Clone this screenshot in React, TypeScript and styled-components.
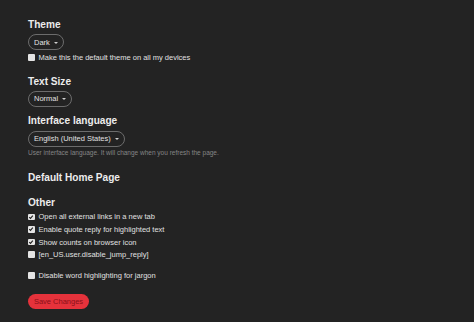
import styled, { createGlobalStyle } from "styled-components";

const GlobalStyle = createGlobalStyle`
  html, body {
    margin: 0;
    padding: 0;
    background: #232323;
  }
  body {
    font-family: "Liberation Sans", Arial, sans-serif;
    color: #dedede;
  }
`;

const Page = styled.div`
  padding: 18px 28px 0 28px;
  display: flex;
  flex-direction: column;
  align-items: flex-start;
`;

const Heading = styled.h3<{ $top?: number }>`
  margin: ${(p) => p.$top ?? 0}px 0 0 0;
  font-size: 10.1px;
  line-height: 14px;
  font-weight: bold;
  color: #ececec;
`;

const SelectPill = styled.div<{ $top?: number }>`
  margin-top: ${(p) => p.$top ?? 2}px;
  height: 16px;
  box-sizing: border-box;
  display: inline-flex;
  align-items: center;
  gap: 4px;
  padding: 0 5px 0 5px;
  border: 1px solid #6c6c6c;
  border-radius: 8px;
  font-size: 7.5px;
  color: #e2e2e2;
`;

const Caret = styled.span`
  width: 0;
  height: 0;
  border-left: 2px solid transparent;
  border-right: 2px solid transparent;
  border-top: 2.5px solid #cfcfcf;
  margin-top: 1px;
`;

const Row = styled.label<{ $top?: number }>`
  margin-top: ${(p) => p.$top ?? 0}px;
  height: 12.6px;
  display: flex;
  align-items: center;
  gap: 4px;
  font-size: 7.5px;
  color: #e0e0e0;
`;

const Box = styled.span`
  width: 6.5px;
  height: 6.5px;
  background: #e4e4e4;
  border-radius: 1px;
  display: inline-flex;
  align-items: center;
  justify-content: center;
  flex-shrink: 0;
`;

const Helper = styled.div`
  margin-top: 1px;
  font-size: 6.5px;
  line-height: 10px;
  color: #858585;
`;

const SaveButton = styled.button`
  margin-top: 12px;
  width: 61px;
  height: 15px;
  border: none;
  border-radius: 8px;
  background: #e5323b;
  color: #8a1119;
  font-family: "Liberation Sans", Arial, sans-serif;
  font-size: 7.5px;
  padding: 0;
`;

const Check = ({ checked }: { checked: boolean }) => (
  <Box>
    {checked && (
      <svg width="6" height="6" viewBox="0 0 10 10">
        <path d="M2 5.2 L4.2 7.4 L8 2.8" fill="none" stroke="#222" strokeWidth="1.8" />
      </svg>
    )}
  </Box>
);

const options = [
  { label: "Open all external links in a new tab", checked: true },
  { label: "Enable quote reply for highlighted text", checked: true },
  { label: "Show counts on browser icon", checked: true },
  { label: "[en_US.user.disable_jump_reply]", checked: false },
];

export default function App() {
  return (
    <>
      <GlobalStyle />
      <Page>
        <Heading>Theme</Heading>
        <SelectPill>
          Dark <Caret />
        </SelectPill>
        <Row $top={1}>
          <Check checked={false} />
          Make this the default theme on all my devices
        </Row>

        <Heading $top={11}>Text Size</Heading>
        <SelectPill>
          Normal <Caret />
        </SelectPill>

        <Heading $top={7}>Interface language</Heading>
        <SelectPill $top={3}>
          English (United States) <Caret />
        </SelectPill>
        <Helper>User interface language. It will change when you refresh the page.</Helper>

        <Heading $top={13}>Default Home Page</Heading>

        <Heading $top={11}>Other</Heading>
        {options.map((o, i) => (
          <Row key={o.label} $top={i === 0 ? 1 : 0}>
            <Check checked={o.checked} />
            {o.label}
          </Row>
        ))}
        <Row $top={8}>
          <Check checked={false} />
          Disable word highlighting for jargon
        </Row>

        <SaveButton>Save Changes</SaveButton>
      </Page>
    </>
  );
}
